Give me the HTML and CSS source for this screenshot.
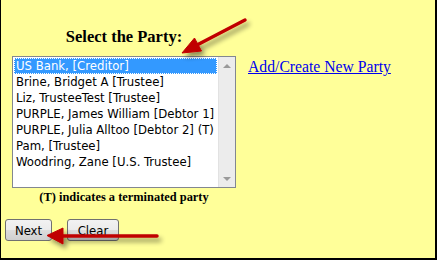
FILE: index.html
```html
<!DOCTYPE html>
<html>
<head>
<meta charset="utf-8">
<link rel="stylesheet" href="styles.css">
</head>
<body>
<div class="frame">
  <div class="main">
    <div class="left">
      <h2 class="title">Select the Party:</h2>
      <div class="listbox">
        <div class="items">
          <div class="item selected">US Bank, [Creditor]</div>
          <div class="item">Brine, Bridget A [Trustee]</div>
          <div class="item">Liz, TrusteeTest [Trustee]</div>
          <div class="item">PURPLE, James William [Debtor 1]</div>
          <div class="item">PURPLE, Julia Alltoo [Debtor 2] (T)</div>
          <div class="item">Pam, [Trustee]</div>
          <div class="item">Woodring, Zane [U.S. Trustee]</div>
        </div>
        <div class="scrollbar">
          <span class="arrow up"></span>
          <span class="arrow down"></span>
        </div>
      </div>
      <p class="note">(T) indicates a terminated party</p>
    </div>
    <a class="addlink" href="#">Add/Create New Party</a>
  </div>
  <div class="buttons">
    <button class="btn btn-next">Next</button>
    <button class="btn btn-clear">Clear</button>
  </div>
  <svg class="overlay" width="437" height="260" viewBox="0 0 437 260">
    <defs>
      <filter id="sh" x="-20%" y="-50%" width="140%" height="200%">
        <feGaussianBlur in="SourceAlpha" stdDeviation="2.5"/>
        <feOffset dx="3" dy="4" result="b"/>
        <feComponentTransfer><feFuncA type="linear" slope="0.45"/></feComponentTransfer>
        <feMerge><feMergeNode/><feMergeNode in="SourceGraphic"/></feMerge>
      </filter>
    </defs>
    <g filter="url(#sh)" fill="#c00000" stroke="#c00000">
      <line x1="245" y1="20" x2="197" y2="45" stroke-width="3.5" stroke-linecap="round"/>
      <polygon points="182,53 194.5,38 201.5,51" stroke-width="1" stroke-linejoin="round"/>
      <line x1="157" y1="236" x2="62" y2="236" stroke-width="3.5" stroke-linecap="round"/>
      <polygon points="47,235.5 63,228 63,244" stroke-width="1" stroke-linejoin="round"/>
    </g>
  </svg>
</div>
</body>
</html>
```
FILE: styles.css
```css
html, body {
  margin: 0;
  padding: 0;
}
.frame {
  position: relative;
  width: 437px;
  height: 260px;
  box-sizing: border-box;
  background: #ffff99;
  border-left: 1px solid #000;
  border-right: 2px solid #000;
  border-bottom: 2px solid #000;
  overflow: hidden;
}
.main {
  display: flex;
  align-items: flex-start;
  padding-left: 11px;
  padding-top: 27px;
  gap: 12px;
}
.left {
  width: 224px;
  display: flex;
  flex-direction: column;
  align-items: center;
}
.title {
  margin: 0 0 10px 0;
  font-family: "Liberation Serif", serif;
  font-size: 16.5px;
  font-weight: bold;
  line-height: 19px;
  color: #000;
}
.listbox {
  width: 224px;
  height: 132px;
  box-sizing: border-box;
  border: 1px solid #828790;
  background: #fff;
  display: flex;
}
.items {
  flex: 1;
  padding: 1px 1px 0 1px;
}
.item {
  height: 16px;
  line-height: 16px;
  padding-left: 2px;
  font-family: "DejaVu Sans Condensed", "DejaVu Sans", sans-serif;
  font-size: 13px;
  color: #000;
  white-space: nowrap;
  box-sizing: border-box;
}
.item.selected {
  background: #3399ff;
  color: #fff;
  outline: 1px dotted #fff;
  outline-offset: -1px;
}
.scrollbar {
  width: 17px;
  background: #ececec;
  border-left: 1px solid #e2e2e2;
  display: flex;
  flex-direction: column;
  justify-content: space-between;
  align-items: center;
  padding: 7px 0 6px 0;
  box-sizing: border-box;
}
.arrow {
  width: 0;
  height: 0;
  border-left: 4px solid transparent;
  border-right: 4px solid transparent;
}
.arrow.up {
  border-bottom: 4px solid #9a9a9a;
}
.arrow.down {
  border-top: 4px solid #9a9a9a;
}
.note {
  margin: 2px 0 0 0;
  font-family: "Liberation Serif", serif;
  font-size: 12.4px;
  font-weight: bold;
  line-height: 14px;
  color: #000;
}
.addlink {
  margin-top: 31px;
  font-family: "Liberation Serif", serif;
  font-size: 15.7px;
  color: #0000ee;
  text-decoration: underline;
  line-height: 18px;
}
.buttons {
  display: flex;
  gap: 15px;
  padding-left: 4px;
  margin-top: 15px;
}
.btn {
  height: 22px;
  padding: 0;
  font-family: "DejaVu Sans Condensed", "DejaVu Sans", sans-serif;
  font-size: 13px;
  color: #000;
  border: 1px solid #707070;
  border-radius: 3px;
  background: linear-gradient(#f2f2f2 0%, #ebebeb 50%, #dddddd 51%, #cfcfcf 100%);
}
.btn-next {
  width: 47px;
}
.btn-clear {
  width: 52px;
}
.overlay {
  position: absolute;
  left: -1px;
  top: 0;
  pointer-events: none;
}
```
